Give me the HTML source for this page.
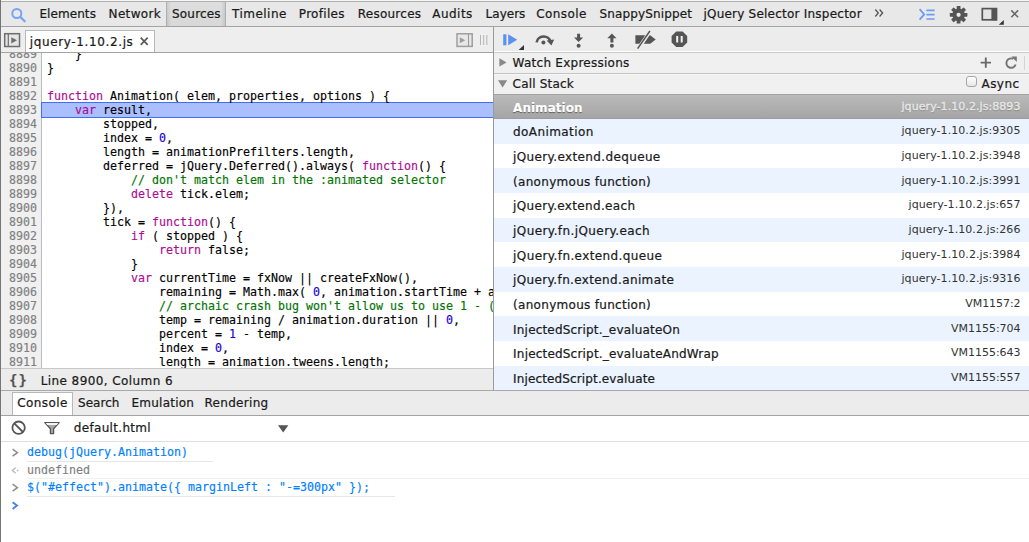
<!DOCTYPE html>
<html><head><meta charset="utf-8">
<style>
*{box-sizing:border-box;margin:0;padding:0}
html,body{width:1029px;height:542px;overflow:hidden;background:#fff}
body{position:relative;font-family:"DejaVu Sans","Liberation Sans",sans-serif;font-size:12px;color:#1a1a1a}
.abs{position:absolute}
.t{position:absolute;white-space:nowrap;line-height:16px;-webkit-text-stroke:0.22px}
.mono{-webkit-text-stroke:0.15px}
.mono{font-family:"DejaVu Sans Mono","Liberation Mono",monospace;font-size:11.63px}
#leftborder{left:0;top:0;width:1px;height:542px;background:#767676;z-index:50}
#topbar{left:0;top:0;width:1029px;height:27px;background:#e8e8e8;border-top:1px solid #f6f6f6;border-bottom:1px solid #a3a3a3}
#topbar:before{content:"";position:absolute;left:0;top:0;width:100%;height:1px;background:#b0b0b0}

#seltab{left:166px;top:1px;width:60px;height:24px;background:linear-gradient(90deg,rgba(0,0,0,.26),rgba(0,0,0,.08) 1.5px,rgba(0,0,0,0) 5px,rgba(0,0,0,0) 55px,rgba(0,0,0,.08) 58.5px,rgba(0,0,0,.26)),linear-gradient(#dedede,#d8d8d8)}
#strip{left:1px;top:27px;width:492px;height:26px;background:#eee;border-bottom:1px solid #a3a3a3}
#filetab{left:25px;top:30px;width:130px;height:22px;background:#fff;border:1px solid #b8b8b8;border-bottom:none}
#split{left:493px;top:27px;width:1px;height:363px;background:#9a9a9a}
#dbgbar{left:494px;top:27px;width:535px;height:26px;background:#ececec;border-bottom:1px solid #cacaca;box-shadow:inset 0 -1px 0 #fff}
#watch{left:494px;top:53px;width:535px;height:21px;background:#f0f0f0;border-bottom:1px solid #c4c4c4}
#callh{left:494px;top:74px;width:535px;height:20px;background:#f0f0f0;border-top:1px solid #f7f7f7}
#rows{left:494px;top:94px;width:535px;height:296px;background:#fff}
.row{position:absolute;left:0;width:535px;height:24.67px}
.row.alt{background:#eaf3ff}
.row.sel{background:linear-gradient(#bababa,#a5a5a5);border-top:1px solid #a2a2a2;border-bottom:1px solid #9c9c9c}
.row .n{position:absolute;left:19px;top:5px;line-height:16px;white-space:nowrap}
.row .l{position:absolute;right:9px;top:5px;line-height:16px;white-space:nowrap;font-size:11px;color:#333}
.row.sel .l{color:#e8e8e8;font-weight:normal}
#gutter{left:1px;top:53px;width:41px;height:315px;background:#f0f0f0;border-right:1px solid #bbb}
#code{left:1px;top:53px;width:492px;height:315px;overflow:hidden;background:#fff}
.ln{position:absolute;left:0;height:14px;line-height:14px;width:492px;white-space:pre}
.ln .g{position:absolute;left:0;width:36px;text-align:right;color:#808080}
.ln .c{position:absolute;left:46px;color:#000}
.k{color:#aa0d91}.cm{color:#007400}.nu{color:#1c00cf}
#exec{left:41px;top:102px;width:452px;height:16px;background:#abbffe;border:1px solid #3f70f4;border-right:none}
#status{left:1px;top:368px;width:492px;height:22px;background:#ececec;border-top:1px solid #c8c8c8}
#drawer{left:0;top:390px;width:1029px;height:26px;background:#ececec;border-top:1px solid #a8a8a8;border-bottom:1px solid #a3a3a3}
#contab{left:12px;top:392px;width:61px;height:23px;background:#fff;border:1px solid #b8b8b8;border-bottom:none}
#conbar{left:1px;top:416px;width:1028px;height:26px;background:#fff;border-bottom:1px solid #e0e0e0}
.hl{position:absolute;height:1px;background:#ececec}
</style></head><body>
<div class="abs" id="topbar">
 <div class="abs" id="seltab"></div>
</div>
<div class="abs" id="strip"></div>
<div class="abs" id="filetab"></div>
<div class="abs" id="code"></div>
<div class="abs" id="gutter"></div>
<div class="abs" id="exec"></div>
<div class="abs mono" id="lines" style="left:1px;top:53px;width:492px;height:315px;overflow:hidden">
<div class="ln" style="top:-6px"><span class="g">8889</span><span class="c">    }</span></div>
<div class="ln" style="top:8px"><span class="g">8890</span><span class="c">}</span></div>
<div class="ln" style="top:22px"><span class="g">8891</span><span class="c"></span></div>
<div class="ln" style="top:36px"><span class="g">8892</span><span class="c"><span class="k">function</span> Animation( elem, properties, options ) {</span></div>
<div class="ln" style="top:50px"><span class="g">8893</span><span class="c">    <span class="k">var</span> result,</span></div>
<div class="ln" style="top:64px"><span class="g">8894</span><span class="c">        stopped,</span></div>
<div class="ln" style="top:78px"><span class="g">8895</span><span class="c">        index = <span class="nu">0</span>,</span></div>
<div class="ln" style="top:92px"><span class="g">8896</span><span class="c">        length = animationPrefilters.length,</span></div>
<div class="ln" style="top:106px"><span class="g">8897</span><span class="c">        deferred = jQuery.Deferred().always( <span class="k">function</span>() {</span></div>
<div class="ln" style="top:120px"><span class="g">8898</span><span class="c">            <span class="cm">// don't match elem in the :animated selector</span></span></div>
<div class="ln" style="top:134px"><span class="g">8899</span><span class="c">            <span class="k">delete</span> tick.elem;</span></div>
<div class="ln" style="top:148px"><span class="g">8900</span><span class="c">        }),</span></div>
<div class="ln" style="top:162px"><span class="g">8901</span><span class="c">        tick = <span class="k">function</span>() {</span></div>
<div class="ln" style="top:176px"><span class="g">8902</span><span class="c">            <span class="k">if</span> ( stopped ) {</span></div>
<div class="ln" style="top:190px"><span class="g">8903</span><span class="c">                <span class="k">return</span> false;</span></div>
<div class="ln" style="top:204px"><span class="g">8904</span><span class="c">            }</span></div>
<div class="ln" style="top:218px"><span class="g">8905</span><span class="c">            <span class="k">var</span> currentTime = fxNow || createFxNow(),</span></div>
<div class="ln" style="top:232px"><span class="g">8906</span><span class="c">                remaining = Math.max( <span class="nu">0</span>, animation.startTime + animation.duration - currentTime ),</span></div>
<div class="ln" style="top:246px"><span class="g">8907</span><span class="c">                <span class="cm">// archaic crash bug won't allow us to use 1 - ( 0.5 || 0 ) (#12497)</span></span></div>
<div class="ln" style="top:260px"><span class="g">8908</span><span class="c">                temp = remaining / animation.duration || <span class="nu">0</span>,</span></div>
<div class="ln" style="top:274px"><span class="g">8909</span><span class="c">                percent = <span class="nu">1</span> - temp,</span></div>
<div class="ln" style="top:288px"><span class="g">8910</span><span class="c">                index = <span class="nu">0</span>,</span></div>
<div class="ln" style="top:302px"><span class="g">8911</span><span class="c">                length = animation.tweens.length;</span></div>

</div>
<div class="abs" id="status"></div>
<div class="abs" id="split"></div>
<div class="abs" id="dbgbar"></div>
<div class="abs" id="watch"></div>
<div class="abs" id="callh"></div>
<div class="abs" id="rows">
<div class="row sel" style="top:0px;height:25px"></div>
<div class="row alt" style="top:25px;height:25px"></div>
<div class="row" style="top:50px;height:24px"></div>
<div class="row alt" style="top:74px;height:25px"></div>
<div class="row" style="top:99px;height:25px"></div>
<div class="row alt" style="top:124px;height:24px"></div>
<div class="row" style="top:148px;height:25px"></div>
<div class="row alt" style="top:173px;height:25px"></div>
<div class="row" style="top:198px;height:24px"></div>
<div class="row alt" style="top:222px;height:25px"></div>
<div class="row" style="top:247px;height:25px"></div>
<div class="row alt" style="top:272px;height:24px"></div>

</div>
<div class="abs" id="drawer"></div>
<div class="abs" id="contab"></div>
<div class="abs" id="conbar"></div>
<div class="abs" id="cb" style="left:966px;top:76px;width:11px;height:11px;border:1px solid #a6a6a6;border-radius:3px;background:linear-gradient(#fff,#e6e6e6)"></div>
<span class="t mono" style="left:9px;top:372px;font-weight:bold;font-size:14px;color:#555;letter-spacing:1px">{}</span>
<div class="hl" style="left:27px;top:461px;width:186px;background:#e6e6e6"></div>
<div class="hl" style="left:27px;top:478px;width:1002px;background:#f0f0f0"></div>
<div class="hl" style="left:27px;top:496px;width:368px;background:#e6e6e6"></div>
<span class="t mono" style="left:27px;top:444px;color:#0080ff">debug(jQuery.Animation)</span>
<span class="t mono" style="left:27px;top:462px;color:#808080">undefined</span>
<span class="t mono" style="left:27px;top:479px;color:#0080ff">$("#effect").animate({ marginLeft : "-=300px" });</span>
<span class="t" id="t1" style="left:39.40px;top:6px;letter-spacing:0.083px;">Elements</span>
<span class="t" id="t2" style="left:108.60px;top:6px;letter-spacing:0.327px;">Network</span>
<span class="t" id="t3" style="left:172.00px;top:6px;letter-spacing:0.190px;">Sources</span>
<span class="t" id="t4" style="left:232.10px;top:6px;letter-spacing:0.459px;">Timeline</span>
<span class="t" id="t5" style="left:298.80px;top:6px;letter-spacing:0.315px;">Profiles</span>
<span class="t" id="t6" style="left:357.70px;top:6px;letter-spacing:0.256px;">Resources</span>
<span class="t" id="t7" style="left:432.30px;top:6px;letter-spacing:0.461px;">Audits</span>
<span class="t" id="t8" style="left:485.60px;top:6px;letter-spacing:0.014px;">Layers</span>
<span class="t" id="t9" style="left:536.20px;top:6px;letter-spacing:0.437px;">Console</span>
<span class="t" id="t10" style="left:599.40px;top:6px;letter-spacing:0.154px;">SnappySnippet</span>
<span class="t" id="t11" style="left:703.40px;top:6px;letter-spacing:0.228px;">jQuery Selector Inspector</span>
<span class="t" id="ft" style="left:29.80px;top:34px;letter-spacing:0.627px;">jquery-1.10.2.js</span>
<span class="t" id="st" style="left:40.70px;top:373px;letter-spacing:0.415px;">Line 8900, Column 6</span>
<span class="t" id="we" style="left:512.60px;top:55px;letter-spacing:0.260px;">Watch Expressions</span>
<span class="t" id="cs" style="left:512.60px;top:76px;letter-spacing:0.196px;">Call Stack</span>
<span class="t" id="as" style="left:981.50px;top:76px;letter-spacing:0.447px;">Async</span>
<span class="t" id="d1" style="left:17.20px;top:395px;letter-spacing:0.408px;">Console</span>
<span class="t" id="d2" style="left:78.00px;top:395px;letter-spacing:0.044px;">Search</span>
<span class="t" id="d3" style="left:131.50px;top:395px;letter-spacing:0.237px;">Emulation</span>
<span class="t" id="d4" style="left:204.50px;top:395px;letter-spacing:0.302px;">Rendering</span>
<span class="t" id="dh" style="left:73.80px;top:420px;letter-spacing:0.319px;">default.html</span>
<span class="t" id="rn0" style="left:513.10px;top:100px;letter-spacing:0.024px;font-weight:bold;color:#fff;text-shadow:0 1px 1px rgba(0,0,0,.45)">Animation</span>
<span class="t" id="rl0" style="left:901.50px;top:99px;letter-spacing:0.068px;font-size:11px;-webkit-text-stroke:0.4px;color:#e6e6e6;text-shadow:0 1px 1px rgba(0,0,0,.25)">jquery-1.10.2.js:8893</span>
<span class="t" id="rn1" style="left:513.10px;top:124px;letter-spacing:0.405px;">doAnimation</span>
<span class="t" id="rl1" style="left:901.50px;top:123px;letter-spacing:0.068px;font-size:11px;-webkit-text-stroke:0;color:#333">jquery-1.10.2.js:9305</span>
<span class="t" id="rn2" style="left:513.10px;top:149px;letter-spacing:0.362px;">jQuery.extend.dequeue</span>
<span class="t" id="rl2" style="left:901.50px;top:148px;letter-spacing:0.068px;font-size:11px;-webkit-text-stroke:0;color:#333">jquery-1.10.2.js:3948</span>
<span class="t" id="rn3" style="left:513.10px;top:174px;letter-spacing:0.295px;">(anonymous function)</span>
<span class="t" id="rl3" style="left:901.50px;top:173px;letter-spacing:0.068px;font-size:11px;-webkit-text-stroke:0;color:#333">jquery-1.10.2.js:3991</span>
<span class="t" id="rn4" style="left:513.10px;top:198px;letter-spacing:0.336px;">jQuery.extend.each</span>
<span class="t" id="rl4" style="left:908.50px;top:197px;letter-spacing:0.072px;font-size:11px;-webkit-text-stroke:0;color:#333">jquery-1.10.2.js:657</span>
<span class="t" id="rn5" style="left:513.10px;top:223px;letter-spacing:0.409px;">jQuery.fn.jQuery.each</span>
<span class="t" id="rl5" style="left:908.50px;top:222px;letter-spacing:0.072px;font-size:11px;-webkit-text-stroke:0;color:#333">jquery-1.10.2.js:266</span>
<span class="t" id="rn6" style="left:513.10px;top:248px;letter-spacing:0.398px;">jQuery.fn.extend.queue</span>
<span class="t" id="rl6" style="left:901.50px;top:247px;letter-spacing:0.068px;font-size:11px;-webkit-text-stroke:0;color:#333">jquery-1.10.2.js:3984</span>
<span class="t" id="rn7" style="left:513.10px;top:272px;letter-spacing:0.364px;">jQuery.fn.extend.animate</span>
<span class="t" id="rl7" style="left:901.50px;top:271px;letter-spacing:0.068px;font-size:11px;-webkit-text-stroke:0;color:#333">jquery-1.10.2.js:9316</span>
<span class="t" id="rn8" style="left:513.10px;top:297px;letter-spacing:0.295px;">(anonymous function)</span>
<span class="t" id="rl8" style="left:965.30px;top:296px;letter-spacing:-0.065px;font-size:11px;-webkit-text-stroke:0;color:#333">VM1157:2</span>
<span class="t" id="rn9" style="left:513.10px;top:322px;letter-spacing:0.186px;">InjectedScript._evaluateOn</span>
<span class="t" id="rl9" style="left:951.10px;top:321px;letter-spacing:-0.032px;font-size:11px;-webkit-text-stroke:0;color:#333">VM1155:704</span>
<span class="t" id="rn10" style="left:513.10px;top:346px;letter-spacing:0.194px;">InjectedScript._evaluateAndWrap</span>
<span class="t" id="rl10" style="left:951.10px;top:345px;letter-spacing:-0.032px;font-size:11px;-webkit-text-stroke:0;color:#333">VM1155:643</span>
<span class="t" id="rn11" style="left:513.10px;top:371px;letter-spacing:0.130px;">InjectedScript.evaluate</span>
<span class="t" id="rl11" style="left:951.10px;top:370px;letter-spacing:-0.032px;font-size:11px;-webkit-text-stroke:0;color:#333">VM1155:557</span>

<svg class="abs" id="icons" width="1029" height="542" viewBox="0 0 1029 542" style="left:0;top:0;z-index:20">
<!-- search -->
<g fill="none" stroke="#76a3f5" stroke-linecap="round"><circle cx="16.8" cy="13.5" r="4.55" stroke-width="1.9"/><path d="M20.4 17L24.7 21.3" stroke-width="2.3"/></g>
<!-- more tabs chevrons -->
<path d="M875.3 9.5L878.3 13L875.3 16.5M879.6 9.5L882.6 13L879.6 16.5" fill="none" stroke="#555" stroke-width="1.3"/>
<!-- console toggle -->
<g fill="none" stroke="#6b9bf4"><path d="M919.6 9.2L924.2 14.4L919.6 19.6" stroke-width="1.8"/><path d="M926.4 10.4H934.6M926.4 14.7H934.6M926.4 19H934.6" stroke-width="1.7"/></g>
<!-- gear -->
<g transform="translate(958.6 14.8)" fill="#555">
<g id="teeth"><rect x="-1.9" y="-8.8" width="3.8" height="17.6" rx="0.6"/><rect x="-8.8" y="-1.9" width="17.6" height="3.8" rx="0.6"/></g>
<g transform="rotate(45)"><rect x="-1.9" y="-8.8" width="3.8" height="17.6" rx="0.6"/><rect x="-8.8" y="-1.9" width="17.6" height="3.8" rx="0.6"/></g>
<circle r="6.3"/><circle r="2.1" fill="#ececec"/></g>
<!-- dock -->
<rect x="982.3" y="8.6" width="14.2" height="11.2" fill="#e4e4e4" stroke="#555" stroke-width="1.7"/><rect x="991.4" y="8" width="5.6" height="12.4" fill="#555"/>
<path d="M1003.8 19.9V24.7H998.8Z" fill="#333"/>
<!-- close -->
<path d="M1011.3 10.4L1018.1 17.3M1018.1 10.4L1011.3 17.3" stroke="#666" stroke-width="1.5" fill="none"/>
<!-- navigator toggle -->
<rect x="4.7" y="33.7" width="14.8" height="12.8" fill="#e6e6e6" stroke="#6e6e6e" stroke-width="1.5"/><path d="M8.3 34V46" stroke="#6e6e6e" stroke-width="1.2"/><path d="M11.3 37.2L17 40.3L11.3 43.4Z" fill="#6e6e6e"/>
<!-- file tab close -->
<path d="M140.7 37.7L147.7 44.8M147.7 37.7L140.7 44.8" stroke="#5a5a5a" stroke-width="1.7" fill="none"/>
<!-- right toggle (disabled) -->
<rect x="457" y="33.8" width="15.2" height="12.6" fill="#e8e8e8" stroke="#9e9e9e" stroke-width="1.5"/><path d="M468.5 34V46" stroke="#9e9e9e" stroke-width="1.2"/><path d="M459.8 37.2L465.3 40.2L459.8 43.2Z" fill="#9e9e9e"/>
<path d="M480.5 35V45M483.7 35V45M486.9 35V45" stroke="#b6b6b6" stroke-width="1"/>
<!-- resume -->
<rect x="503.2" y="34.3" width="3.2" height="11" fill="#5b8ff0"/><path d="M508.2 34.3L517.2 39.8L508.2 45.3Z" fill="#5b8ff0"/>
<path d="M524 45V50H518.6Z" fill="#333"/>
<!-- step over -->
<path d="M536.6 42.4A7.2 7.2 0 0 1 550.6 41.6" fill="none" stroke="#555" stroke-width="2.6"/><path d="M546.6 40.4L554.2 39.4L551.4 45.6Z" fill="#555"/><circle cx="543.4" cy="42.5" r="2" fill="#555"/>
<!-- step into -->
<path d="M577.1 33.8H580.1V37.4H583.2L578.6 42L574 37.4H577.1Z" fill="#555"/><circle cx="578.6" cy="45.7" r="2" fill="#555"/>
<!-- step out -->
<path d="M611.9 33.6L616.5 38.2H613.4V42.6H610.4V38.2H607.3Z" fill="#555"/><circle cx="611.9" cy="45.7" r="2" fill="#555"/>
<!-- deactivate breakpoints -->
<path d="M635.4 35.2H650.2L655.7 39.5L650.2 43.8H635.4Z" fill="#555"/><path d="M650.6 30.6L638.4 48.6" stroke="#ececec" stroke-width="3.6"/><path d="M649.9 31L637.6 48.6" stroke="#555" stroke-width="1.5"/>
<!-- pause on exceptions -->
<path d="M676.2 31.5H682.6L687.2 36.1V42.5L682.6 47.1H676.2L671.6 42.5V36.1Z" fill="#555"/><path d="M677.2 36.1V42.5M681.7 36.1V42.5" stroke="#f4f4f4" stroke-width="2"/>
<!-- disclosure triangles -->
<path d="M499.4 58.3L506.6 62.4L499.4 66.5Z" fill="#888"/>
<path d="M498 80.2H507.2L502.6 87.4Z" fill="#888"/>
<!-- plus, refresh -->
<path d="M985.8 57.4V67.8M980.6 62.6H991" stroke="#6a6a6a" stroke-width="1.9" fill="none"/>
<path d="M1015.6 64.4A4.7 4.7 0 1 1 1013.4 59" fill="none" stroke="#757575" stroke-width="1.9"/><path d="M1011.4 56.6H1016.8V62Z" fill="#757575"/>
<path d="M1024.5 56V70" stroke="#d4d4d4" stroke-width="1"/>
<!-- console clear -->
<circle cx="18.6" cy="427.7" r="6.2" fill="none" stroke="#555" stroke-width="1.8"/><path d="M14.3 423.4L22.9 432" stroke="#555" stroke-width="1.8"/>
<!-- filter -->
<path d="M44.8 422.6H59.2L53.6 428.8V433.6H50.4V428.8Z" fill="#a8a8a8" stroke="#555" stroke-width="1.3" stroke-linejoin="round"/><path d="M45.6 423H58.4L56.6 425H47.4Z" fill="#f4f4f4"/>
<!-- dropdown arrow -->
<path d="M278 425.2H288.4L283.2 432.4Z" fill="#555"/>
<!-- console prompts -->
<path d="M12.6 449.2L17.4 452.7L12.6 456.2" fill="none" stroke="#8c8c8c" stroke-width="1.5"/>
<path d="M15.6 467.6L12.4 470.4L15.6 473.2" fill="none" stroke="#bdbdbd" stroke-width="1.4"/><circle cx="17.6" cy="470.4" r="0.9" fill="#bdbdbd"/>
<path d="M12.6 484.2L17.4 487.7L12.6 491.2" fill="none" stroke="#8c8c8c" stroke-width="1.5"/>
<path d="M12.6 502.2L17 505.6L12.6 509" fill="none" stroke="#4a7ff0" stroke-width="1.9"/>
</svg>

<div class="abs" id="leftborder"></div>
</body></html>
